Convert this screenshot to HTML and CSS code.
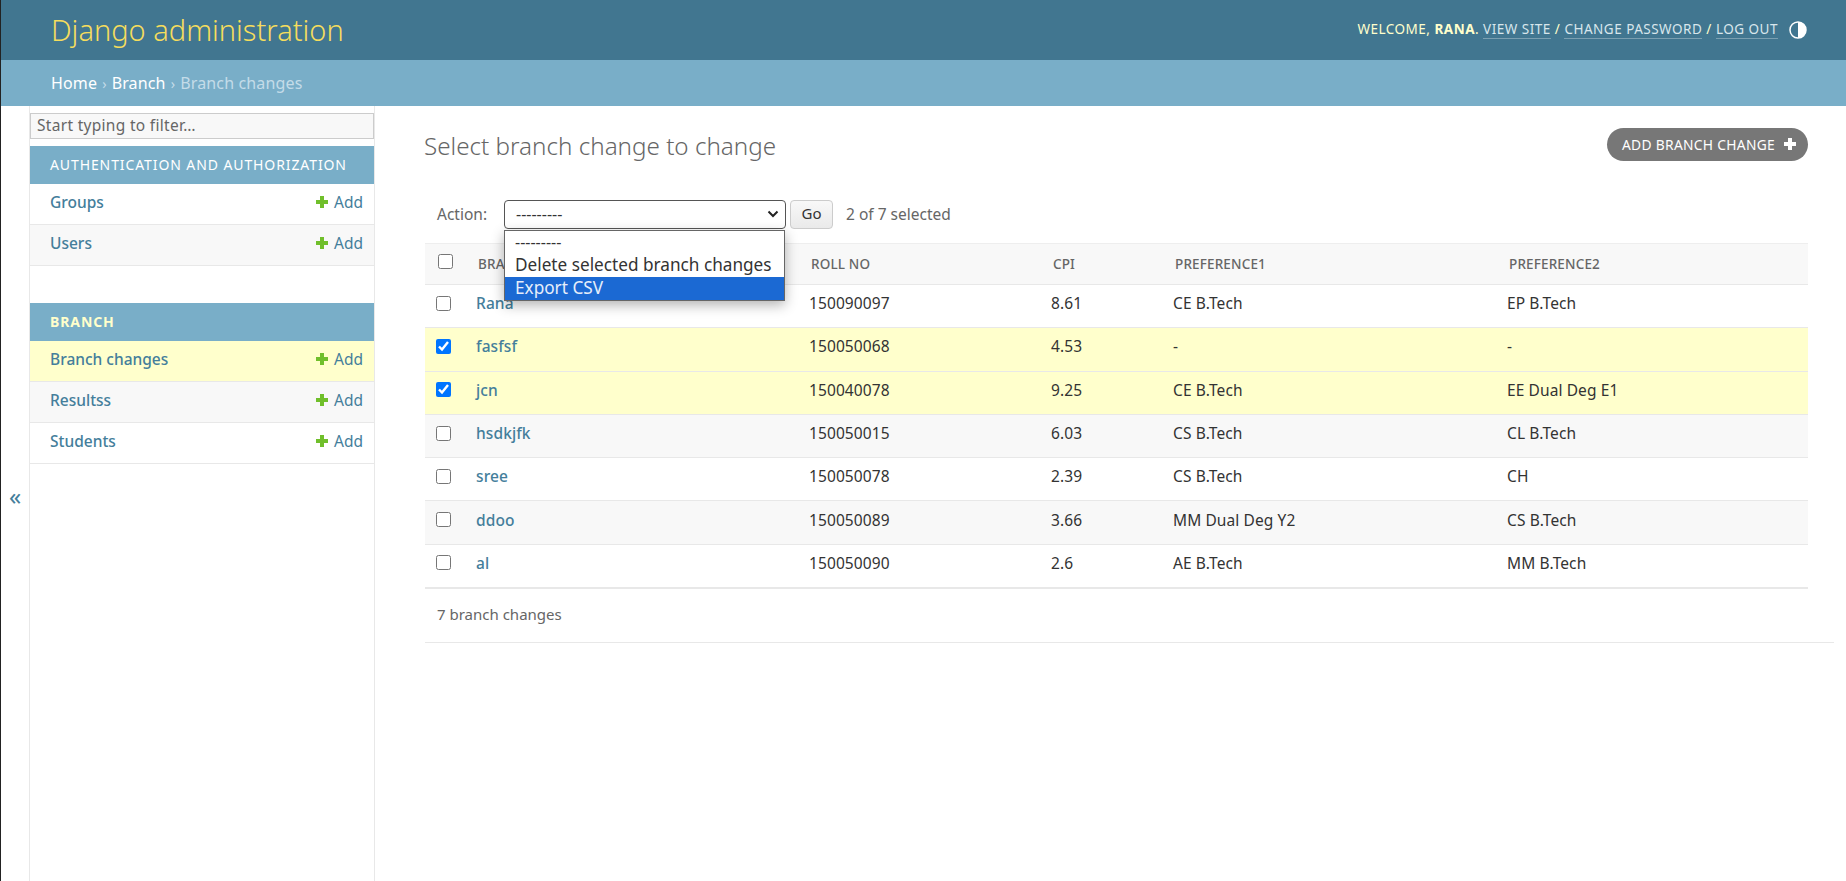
FILE: index.html
```html
<!DOCTYPE html>
<html lang="en">
<head>
    <meta charset="UTF-8">
    <title>Select branch change to change | Django site admin</title>
    <link rel="stylesheet" href="styles.css">
</head>
<body>
    <header class="site-header">
        <div class="branding">Django administration</div>
        <div class="user-tools">
            <div class="user-links">
                Welcome, <strong>Rana</strong>.
                <a href="#">View site</a> /
                <a href="#">Change password</a> /
                <a href="#">Log out</a>
            </div>
            <svg class="theme-icon" width="18" height="18" viewBox="0 0 18 18">
                <circle cx="9" cy="9" r="8" fill="none" stroke="#fff" stroke-width="1.5"/>
                <path d="M9 1a8 8 0 0 1 0 16z" fill="#fff"/>
            </svg>
        </div>
    </header>
    <nav class="breadcrumbs">
        <a href="#">Home</a> <span class="sep">›</span> <a href="#">Branch</a> <span class="sep">›</span> Branch changes
    </nav>

    <div class="main">
        <button class="sidebar-toggle">«</button>
        <aside class="sidebar">
            <input class="nav-filter" type="text" placeholder="Start typing to filter…">

            <div class="module">
                <div class="caption">Authentication and Authorization</div>
                <div class="model-row"><a href="#">Groups</a><a class="add" href="#"><svg class="plus" viewBox="0 0 14 14"><path d="M5 1h4v4h4v4H9v4H5V9H1V5h4z"/></svg>Add</a></div>
                <div class="model-row alt"><a href="#">Users</a><a class="add" href="#"><svg class="plus" viewBox="0 0 14 14"><path d="M5 1h4v4h4v4H9v4H5V9H1V5h4z"/></svg>Add</a></div>
            </div>

            <div class="module">
                <div class="caption current">Branch</div>
                <div class="model-row current"><a href="#">Branch changes</a><a class="add" href="#"><svg class="plus" viewBox="0 0 14 14"><path d="M5 1h4v4h4v4H9v4H5V9H1V5h4z"/></svg>Add</a></div>
                <div class="model-row alt"><a href="#">Resultss</a><a class="add" href="#"><svg class="plus" viewBox="0 0 14 14"><path d="M5 1h4v4h4v4H9v4H5V9H1V5h4z"/></svg>Add</a></div>
                <div class="model-row"><a href="#">Students</a><a class="add" href="#"><svg class="plus" viewBox="0 0 14 14"><path d="M5 1h4v4h4v4H9v4H5V9H1V5h4z"/></svg>Add</a></div>
            </div>
        </aside>

        <main class="content">
            <div class="title-row">
                <h1>Select branch change to change</h1>
                <a class="addlink" href="#">Add branch change<svg class="addlink-plus" viewBox="0 0 14 14"><path d="M5 1h4v4h4v4H9v4H5V9H1V5h4z"/></svg></a>
            </div>

            <div class="changelist">
                <div class="actions">
                    <label>Action:</label>
                    <div class="select-wrap">
                        <div class="select-box">---------<svg class="chevron" width="12" height="8" viewBox="0 0 12 8"><path d="M1.5 1.5 6 6l4.5-4.5" fill="none" stroke="#222" stroke-width="2"/></svg></div>
                        <ul class="select-menu">
                            <li>---------</li>
                            <li>Delete selected branch changes</li>
                            <li class="highlighted">Export CSV</li>
                        </ul>
                    </div>
                    <button class="go">Go</button>
                    <span class="counter">2 of 7 selected</span>
                </div>

                <table class="result-list">
                    <thead>
                        <tr>
                            <th class="col-check"><input type="checkbox"></th>
                            <th class="col-name">Branch</th>
                            <th class="col-roll">Roll no</th>
                            <th class="col-cpi">CPI</th>
                            <th class="col-pref1">Preference1</th>
                            <th>Preference2</th>
                        </tr>
                    </thead>
                    <tbody>
                        <tr><td><input type="checkbox"></td><td><a href="#">Rana</a></td><td>150090097</td><td>8.61</td><td>CE B.Tech</td><td>EP B.Tech</td></tr>
                        <tr class="selected"><td><input type="checkbox" checked></td><td><a href="#">fasfsf</a></td><td>150050068</td><td>4.53</td><td>-</td><td>-</td></tr>
                        <tr class="selected"><td><input type="checkbox" checked></td><td><a href="#">jcn</a></td><td>150040078</td><td>9.25</td><td>CE B.Tech</td><td>EE Dual Deg E1</td></tr>
                        <tr class="alt"><td><input type="checkbox"></td><td><a href="#">hsdkjfk</a></td><td>150050015</td><td>6.03</td><td>CS B.Tech</td><td>CL B.Tech</td></tr>
                        <tr><td><input type="checkbox"></td><td><a href="#">sree</a></td><td>150050078</td><td>2.39</td><td>CS B.Tech</td><td>CH</td></tr>
                        <tr class="alt"><td><input type="checkbox"></td><td><a href="#">ddoo</a></td><td>150050089</td><td>3.66</td><td>MM Dual Deg Y2</td><td>CS B.Tech</td></tr>
                        <tr><td><input type="checkbox"></td><td><a href="#">al</a></td><td>150050090</td><td>2.6</td><td>AE B.Tech</td><td>MM B.Tech</td></tr>
                    </tbody>
                </table>

                <p class="paginator">7 branch changes</p>
            </div>
        </main>
    </div>
</body>
</html>
```

FILE: styles.css
```css
* {
    box-sizing: border-box;
}
html, body {
    height: 100%;
}
body {
    margin: 0;
    border-left: 1px solid #222;
    font-family: "Noto Sans", "Open Sans", sans-serif;
    font-size: 14px;
    color: #333;
    background: #fff;
    overflow: hidden;
}
a {
    color: #447e9b;
    text-decoration: none;
}

/* header */
.site-header {
    height: 60px;
    padding: 0 39px 0 50px;
    display: flex;
    justify-content: space-between;
    align-items: center;
    background: #417690;
    color: #ffc;
}
.branding {
    padding-bottom: 2px;
    font-size: 29px;
    font-weight: 300;
    color: #f5dd5d;
}
.user-tools {
    display: flex;
    align-items: center;
    gap: 11px;
    font-size: 13.5px;
    letter-spacing: 0.5px;
    text-transform: uppercase;
}
.user-links {
    padding-bottom: 2px;
}
.user-links a {
    color: #d8e6ec;
    border-bottom: 1px solid rgba(255, 255, 255, 0.3);
}
.breadcrumbs {
    height: 46px;
    padding-left: 50px;
    display: flex;
    align-items: center;
    gap: 5px;
    background: #79aec8;
    color: #c4dce8;
    font-size: 16px;
    letter-spacing: 0.15px;
}
.breadcrumbs a {
    color: #fff;
}
.breadcrumbs .sep {
    font-size: 14px;
}

/* layout */
.main {
    display: flex;
    height: calc(100% - 106px);
}
.sidebar-toggle {
    width: 28px;
    padding: 3px 0 0;
    border: 0;
    background: #fff;
    color: #447e9b;
    font-family: inherit;
    font-size: 24px;
}
.sidebar {
    width: 346px;
    flex-shrink: 0;
    padding-top: 7px;
    border-left: 1px solid #e8e8e8;
    border-right: 1px solid #e8e8e8;
}
.nav-filter {
    display: block;
    width: 100%;
    height: 26px;
    margin-bottom: 7px;
    padding: 0 6px 2px;
    border: 1px solid #ccc;
    background: #f8f8f8;
    font-family: inherit;
    font-size: 15.5px;
    letter-spacing: 0.3px;
}
.nav-filter::placeholder {
    color: #666;
}
.module {
    margin-bottom: 37px;
}
.caption {
    height: 38px;
    padding: 0 20px 2px;
    display: flex;
    align-items: center;
    background: #79aec8;
    color: #fff;
    font-size: 14px;
    letter-spacing: 0.9px;
    text-transform: uppercase;
}
.caption.current {
    color: #ffc;
    font-weight: 700;
}
.model-row {
    height: 41px;
    padding: 0 11px 4px 20px;
    display: flex;
    justify-content: space-between;
    align-items: center;
    border-bottom: 1px solid #e8e8e8;
    font-size: 15.5px;
    font-weight: 500;
}
.model-row.alt {
    background: #f8f8f8;
}
.model-row.current {
    background: #ffc;
}
.add {
    display: flex;
    align-items: center;
    gap: 5px;
    font-weight: 400;
}
.plus {
    width: 14px;
    height: 14px;
    fill: #70bf2b;
}

/* content */
.content {
    flex: 1;
    padding: 22px 12px 0 50px;
}
.title-row {
    height: 33px;
    display: flex;
    justify-content: space-between;
    align-items: flex-start;
    padding-right: 26px;
}
h1 {
    margin: 1px 0 0 -1px;
    font-size: 24.2px;
    line-height: 34px;
    font-weight: 300;
    color: #666;
}
.addlink {
    height: 33px;
    padding: 0 11px 1px 15px;
    display: flex;
    align-items: center;
    gap: 8px;
    border-radius: 17px;
    background: #777;
    color: #fff;
    font-size: 13.8px;
    letter-spacing: 0.3px;
    text-transform: uppercase;
}
.addlink-plus {
    width: 14px;
    height: 14px;
    fill: #fff;
}
.actions {
    height: 29px;
    margin-top: 39px;
    margin-right: 26px;
    padding-left: 12px;
    display: flex;
    align-items: center;
    color: #666;
}
.actions label {
    width: 67px;
    padding-bottom: 2px;
    font-size: 15.5px;
}
.select-wrap {
    position: relative;
    width: 282px;
    height: 29px;
}
.select-box {
    height: 29px;
    padding: 0 6px 2px 11px;
    display: flex;
    justify-content: space-between;
    align-items: center;
    border: 1px solid #555;
    border-radius: 4px;
    background: #fff;
    color: #333;
    font-size: 16px;
}
.select-menu {
    position: absolute;
    z-index: 2;
    top: 30px;
    left: 0;
    width: 281px;
    margin: 0;
    padding: 0;
    list-style: none;
    border: 1px solid #666;
    background: #fff;
    color: #333;
    font-size: 17.2px;
    box-shadow: 0 4px 12px rgba(0, 0, 0, 0.3);
}
.select-menu li {
    height: 23px;
    padding: 0 10px;
    line-height: 22px;
}
.select-menu li:first-child {
    font-size: 16px;
}
.select-menu .highlighted {
    background: #1b69d3;
    color: #e6eefa;
}
.go {
    width: 43px;
    height: 29px;
    margin-left: 4px;
    padding: 0 0 3px;
    border: 1px solid #ccc;
    border-radius: 4px;
    background: linear-gradient(#f8f8f8, #eaeaea);
    color: #333;
    font-family: inherit;
    font-size: 15px;
}
.counter {
    margin-left: 13px;
    padding-bottom: 1px;
    font-size: 15.5px;
}

/* table */
.result-list {
    width: calc(100% - 26px);
    margin-top: 14px;
    border-collapse: collapse;
    table-layout: fixed;
}
.result-list th {
    height: 41px;
    padding: 0 2px;
    border-top: 1px solid #eee;
    border-bottom: 1px solid #e8e8e8;
    background: #f8f8f8;
    color: #666;
    font-size: 13.5px;
    font-weight: 500;
    letter-spacing: 0.15px;
    text-align: left;
    text-transform: uppercase;
}
.result-list .col-check {
    padding-bottom: 5px;
}
.result-list td {
    height: 43.3px;
    padding: 0 0 6px;
    border-bottom: 1px solid #e8e8e8;
    color: #333;
    font-size: 15.5px;
    letter-spacing: 0.1px;
}
.result-list tbody tr:last-child td {
    border-bottom-width: 2px;
}
.result-list input {
    display: block;
    width: 15px;
    height: 15px;
    margin: 0 0 0 11px;
}
.col-check {
    width: 51px;
}
.col-name {
    width: 333px;
}
.col-roll {
    width: 242px;
}
.col-cpi {
    width: 122px;
}
.col-pref1 {
    width: 334px;
}
.result-list a {
    font-weight: 500;
}
.result-list .selected td {
    background: #ffc;
}
.result-list .alt td {
    background: #f8f8f8;
}
.paginator {
    height: 54px;
    margin: 0;
    padding: 0 0 3px 12px;
    display: flex;
    align-items: center;
    border-bottom: 1px solid #e8e8e8;
    color: #666;
    font-size: 15px;
}
```
